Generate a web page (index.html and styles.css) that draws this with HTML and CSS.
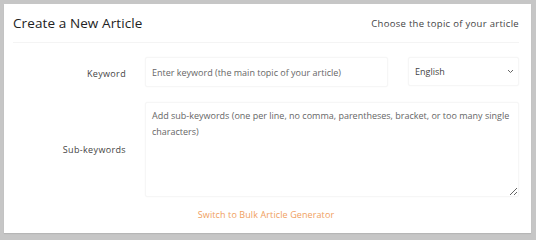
FILE: index.html
```html
<!DOCTYPE html>
<html lang="en">
<head>
<meta charset="utf-8">
<title>Create a New Article</title>
<link rel="stylesheet" href="styles.css">
</head>
<body>
<div class="card">
  <div class="card-header">
    <h1 class="title">Create a New Article</h1>
    <span class="subtitle">Choose the topic of your article</span>
  </div>
  <form class="form">
    <div class="row row-keyword">
      <label class="label label-kw" for="kw">Keyword</label>
      <div class="fields">
        <input id="kw" class="input" type="text" placeholder="Enter keyword (the main topic of your article)">
        <div class="select-wrap">
          <select class="select">
            <option>English</option>
          </select>
          <svg class="chevron" width="7" height="5" viewBox="0 0 7 5"><path d="M1 1l2.5 2.5L6 1" fill="none" stroke="#666" stroke-width="1"/></svg>
        </div>
      </div>
    </div>
    <div class="row row-sub">
      <label class="label" for="sub">Sub-keywords</label>
      <textarea id="sub" class="textarea" placeholder="Add sub-keywords (one per line, no comma, parentheses, bracket, or too many single characters)"></textarea>
    </div>
    <div class="link-row">
      <a class="link" href="#">Switch to Bulk Article Generator</a>
    </div>
  </form>
</div>
</body>
</html>
```
FILE: styles.css
```css
* { box-sizing: border-box; }
html, body { margin: 0; padding: 0; }
body {
  background: #c6c6c6;
  padding: 4px 5px 7px 4px;
  font-family: "Open Sans", "Liberation Sans", sans-serif;
  color: #333;
}
.card {
  width: 527px;
  height: 229px;
  background: #fff;
  padding: 0 12px 0 9px;
  box-shadow: 0 1px 1px rgba(0,0,0,0.08);
}
.card-header {
  display: flex;
  align-items: center;
  justify-content: space-between;
  height: 39px;
  border-bottom: 1px solid #f4f4f4;
}
.title {
  margin: 0;
  font-size: 13.5px;
  font-weight: 400;
  letter-spacing: 0.1px;
  color: #222;
}
.subtitle {
  font-size: 9.5px;
  letter-spacing: 0.3px;
  color: #444;
}
.form {
  padding-top: 14px;
}
.row {
  display: flex;
  align-items: center;
  gap: 19px;
}
.label {
  width: 113px;
  flex: none;
  text-align: right;
  font-size: 9px;
  letter-spacing: 0.35px;
  color: #444;
}
.label-kw {
  padding-top: 3px;
}
.fields {
  display: flex;
  flex: 1;
  gap: 20px;
}
.input, .select, .textarea {
  font-family: inherit;
  font-size: 9px;
  color: #555;
  border: 1px solid #f6f6f6;
  border-radius: 2px;
  background: #fff;
  outline: none;
  box-shadow: 0 0 2px rgba(0,0,0,0.03);
}
.input::placeholder, .textarea::placeholder { color: #666; opacity: 1; }
.input {
  width: 243px;
  height: 30px;
  padding: 0 6px;
}
.select-wrap {
  position: relative;
  width: 111px;
}
.select {
  appearance: none;
  -webkit-appearance: none;
  width: 100%;
  height: 29px;
  padding: 0 6px;
  color: #444;
}
.chevron {
  position: absolute;
  right: 5px;
  top: 12px;
}
.row-sub {
  margin-top: 15px;
}
.textarea {
  flex: 1;
  height: 95px;
  padding: 5px 1px 5px 6px;
  line-height: 16px;
  letter-spacing: 0;
  resize: vertical;
  display: block;
}
.link-row {
  text-align: center;
  margin-top: 8px;
  line-height: 14px;
}
.link {
  font-size: 9px;
  letter-spacing: 0.1px;
  color: #f0a060;
  text-decoration: none;
}
```
